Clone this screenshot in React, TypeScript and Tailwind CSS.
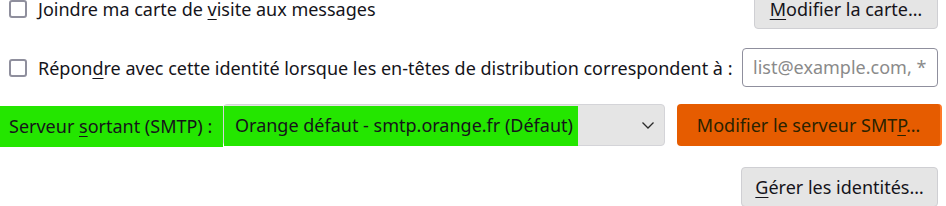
import React from "react";

const U = ({ children }: { children: React.ReactNode }) => (
  <span className="underline underline-offset-[3px] decoration-1">{children}</span>
);

const Checkbox = () => (
  <span className="inline-block w-[18px] h-[18px] border-2 border-[#8f8f9d] rounded-[3px] bg-white shrink-0" />
);

export default function App() {
  return (
    <div
      className="w-[946px] h-[206px] overflow-hidden bg-white text-[#15141a] text-[18px]"
      style={{ fontFamily: '"Noto Sans", "Segoe UI", sans-serif' }}
    >
      {/* Row 1 */}
      <div className="flex items-center h-[40px] mt-[-11px] pl-[9px] pr-[8px]">
        <Checkbox />
        <span className="ml-[11px] leading-none whitespace-nowrap">
          Joindre ma carte de <U>v</U>isite aux messages
        </span>
        <div className="flex-1" />
        <button className="h-[40px] w-[184px] bg-[#e5e5e5] border border-[#cfcfd3] rounded-[4px] flex items-center justify-center whitespace-nowrap">
          <span><U>M</U>odifier la carte…</span>
        </button>
      </div>

      {/* Row 2 */}
      <div className="flex items-center h-[39px] mt-[19px] pl-[9px] pr-[8px]">
        <Checkbox />
        <span className="ml-[11px] leading-none whitespace-nowrap">
          Répon<U>d</U>re avec cette identité lorsque les en-têtes de distribution correspondent à :
        </span>
        <div className="flex-1" />
        <div className="h-[39px] w-[196px] border border-[#8f8f9d] rounded-[4px] bg-white flex items-center pl-[10px] pr-[11px] shrink-0">
          <div className="flex-1 overflow-hidden">
            <span className="text-[#8a8a8a] whitespace-nowrap">list@example.com, *@example.com</span>
          </div>
        </div>
      </div>

      {/* Row 3 */}
      <div className="flex items-center h-[42px] mt-[17px] pr-[5px]">
        <div className="h-[41px] mt-[2px] w-[223px] bg-[#24e600] flex items-center pl-[9px] whitespace-nowrap shrink-0">
          <span>Serveur <U>s</U>ortant (SMTP) :</span>
        </div>
        <div className="relative h-[42px] w-[442px] bg-[#e5e5e5] border border-[#d4d4d8] rounded-[4px] flex items-center shrink-0">
          <div className="h-[40px] mt-[1px] w-[354px] bg-[#24e600] flex items-center pl-[11px] whitespace-nowrap">
            <span>Orange défaut - smtp.orange.fr (Défaut)</span>
          </div>
          <div className="flex-1" />
          <svg className="mr-[9px]" width="14" height="10" viewBox="0 0 14 10">
            <path d="M1.5 2.5 L7 8 L12.5 2.5" fill="none" stroke="#2a2a2a" strokeWidth="1.3" />
          </svg>
        </div>
        <div className="w-[12px] shrink-0" />
        <button className="h-[42px] w-[265px] bg-[#e65c00] border-r-2 border-[#ff7a2a] rounded-[4px] flex items-center justify-center text-[#2a2200] whitespace-nowrap shrink-0">
          <span>Modifier le serveur SMT<U>P</U>…</span>
        </button>
      </div>

      {/* Row 4 */}
      <div className="flex justify-end mt-[21px] pr-[8px]">
        <button className="h-[40px] w-[197px] bg-[#e5e5e5] border border-[#cfcfd3] rounded-[4px] flex items-center justify-center whitespace-nowrap">
          <span><U>G</U>érer les identités…</span>
        </button>
      </div>
    </div>
  );
}
